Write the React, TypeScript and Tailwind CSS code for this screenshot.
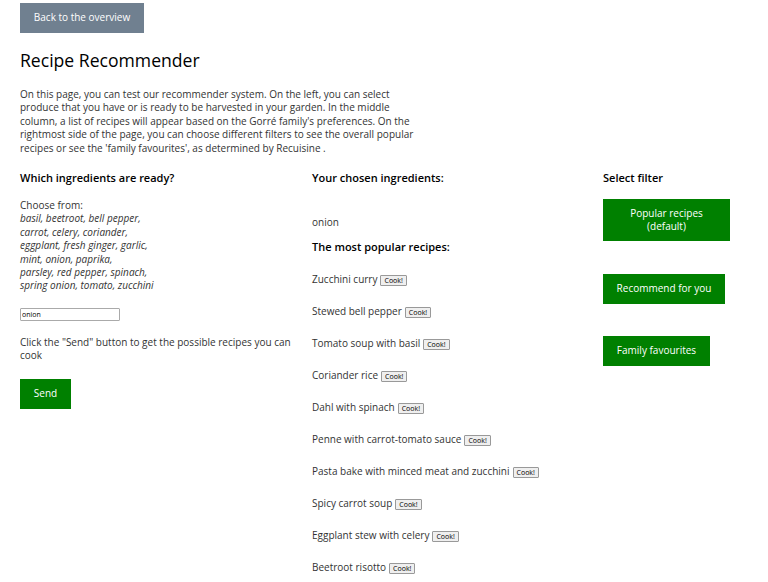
import React from "react";

const recipes = [
  "Zucchini curry",
  "Stewed bell pepper",
  "Tomato soup with basil",
  "Coriander rice",
  "Dahl with spinach",
  "Penne with carrot-tomato sauce",
  "Pasta bake with minced meat and zucchini",
  "Spicy carrot soup",
  "Eggplant stew with celery",
  "Beetroot risotto",
];

export default function App() {
  return (
    <div
      className="w-[768px] h-[582px] overflow-hidden bg-white text-[#333] text-[10px] leading-[13.4px] px-[20px]"
      style={{ fontFamily: '"Open Sans", "Noto Sans", sans-serif' }}
    >
      <div className="pt-[3px]">
        <button className="h-[30px] w-[124px] bg-[#708090] text-white text-[10px] flex items-center justify-center">
          Back to the overview
        </button>
      </div>
      <h1 className="mt-[14px] text-[17.6px] leading-[26px] text-black font-normal">Recipe Recommender</h1>
      <p className="mt-[15px] w-[400px]">
        On this page, you can test our recommender system. On the left, you can select produce that you have or is
        ready to be harvested in your garden. In the middle column, a list of recipes will appear based on the Gorré
        family's preferences. On the rightmost side of the page, you can choose different filters to see the overall
        popular recipes or see the 'family favourites', as determined by Recuisine .
      </p>
      <div className="mt-[16px] grid grid-cols-[292px_291px_1fr]">
        <div>
          <h3 className="font-semibold text-[11px] text-black leading-[14px]">Which ingredients are ready?</h3>
          <p className="mt-[14px]">Choose from:</p>
          <p className="italic">
            basil, beetroot, bell pepper,
            <br />
            carrot, celery, coriander,
            <br />
            eggplant, fresh ginger, garlic,
            <br />
            mint, onion, paprika,
            <br />
            parsley, red pepper, spinach,
            <br />
            spring onion, tomato, zucchini
          </p>
          <input
            defaultValue="onion"
            className="mt-[15px] block w-[100px] h-[13px] border border-[#aaa] rounded-[1px] px-[1px] text-[7px] text-black"
          />
          <p className="mt-[15px] w-[280px]">Click the "Send" button to get the possible recipes you can cook</p>
          <button className="mt-[16px] h-[30px] w-[51px] bg-[#008000] text-white text-[10px]">Send</button>
        </div>
        <div>
          <h3 className="font-semibold text-[11px] text-black leading-[14px]">Your chosen ingredients:</h3>
          <p className="mt-[31px]">onion</p>
          <h3 className="mt-[11px] font-semibold text-[11px] text-black leading-[14px]">The most popular recipes:</h3>
          <div className="mt-[19px] flex flex-col gap-[18.6px]">
            {recipes.map((r) => (
              <div key={r} className="flex items-center">
                <span>{r}</span>
                <button className="ml-[3px] h-[11px] px-[3px] border border-[#999] bg-[#efefef] rounded-[1px] text-[7px] leading-[9px] text-black">
                  Cook!
                </button>
              </div>
            ))}
          </div>
        </div>
        <div>
          <h3 className="font-semibold text-[11px] text-black leading-[14px]">Select filter</h3>
          <button className="mt-[14px] block w-[127px] h-[42px] bg-[#008000] text-white text-[10px] leading-[13px]">
            Popular recipes
            <br />
            (default)
          </button>
          <button className="mt-[33px] block w-[122px] h-[30px] bg-[#008000] text-white text-[10px]">
            Recommend for you
          </button>
          <button className="mt-[32px] block w-[107px] h-[30px] bg-[#008000] text-white text-[10px]">
            Family favourites
          </button>
        </div>
      </div>
    </div>
  );
}
